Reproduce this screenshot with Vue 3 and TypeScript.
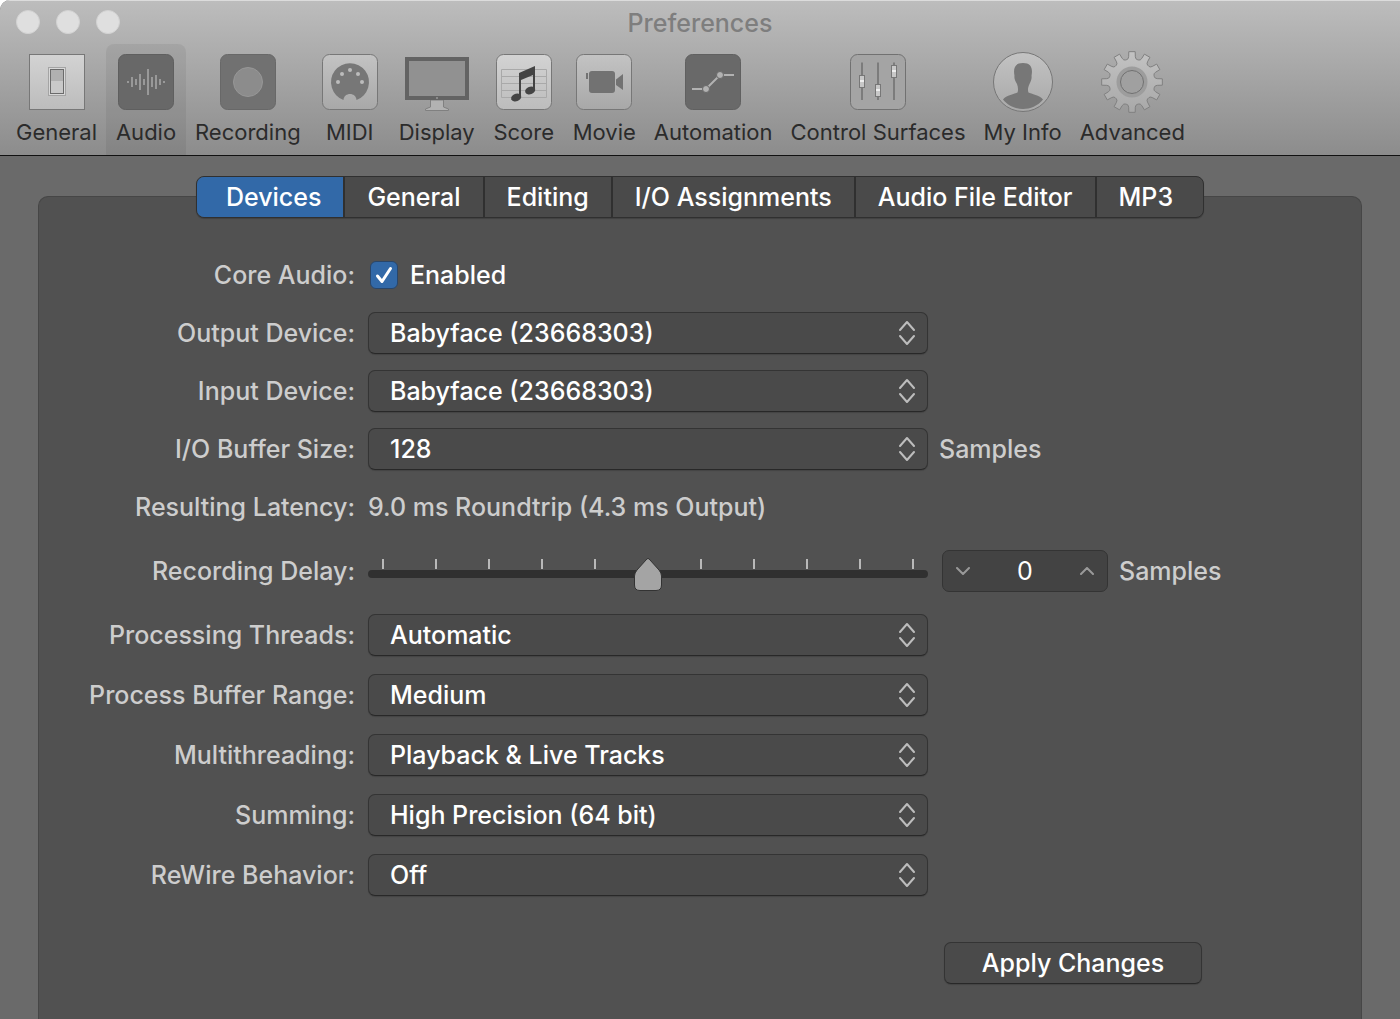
<script setup lang="ts">
import { ref } from 'vue'

interface Item {
  id: string
  label: string
}

interface SelectRow {
  id: string
  label: string
  value: string
  suffix?: string
}

const sections: Item[] = [
  { id: 'general', label: 'General' },
  { id: 'audio', label: 'Audio' },
  { id: 'recording', label: 'Recording' },
  { id: 'midi', label: 'MIDI' },
  { id: 'display', label: 'Display' },
  { id: 'score', label: 'Score' },
  { id: 'movie', label: 'Movie' },
  { id: 'automation', label: 'Automation' },
  { id: 'surfaces', label: 'Control Surfaces' },
  { id: 'info', label: 'My Info' },
  { id: 'advanced', label: 'Advanced' },
]
const activeSection = ref('audio')

const tabs = ['Devices', 'General', 'Editing', 'I/O Assignments', 'Audio File Editor', 'MP3']
const activeTab = ref('Devices')

const coreAudio = ref(true)
const delay = ref(0)

const deviceRows: SelectRow[] = [
  { id: 'output', label: 'Output Device:', value: 'Babyface (23668303)' },
  { id: 'input', label: 'Input Device:', value: 'Babyface (23668303)' },
  { id: 'buffer', label: 'I/O Buffer Size:', value: '128', suffix: 'Samples' },
]

const processingRows: SelectRow[] = [
  { id: 'threads', label: 'Processing Threads:', value: 'Automatic' },
  { id: 'range', label: 'Process Buffer Range:', value: 'Medium' },
  { id: 'multi', label: 'Multithreading:', value: 'Playback & Live Tracks' },
  { id: 'summing', label: 'Summing:', value: 'High Precision (64 bit)' },
  { id: 'rewire', label: 'ReWire Behavior:', value: 'Off' },
]

// x position and half height of each bar of the waveform.
const waveform = [
  [14, 1], [18, 5], [22, 3], [26, 8], [30, 3], [34, 13], [38, 5], [42, 7], [46, 3], [50, 1],
]

// Outline of a twelve-toothed cog centred in a 64 x 64 box.
function cog(): string {
  const at = (r: number, deg: number) => {
    const a = (deg * Math.PI) / 180
    return `${(32 + r * Math.sin(a)).toFixed(2)} ${(32 - r * Math.cos(a)).toFixed(2)}`
  }
  let d = `M${at(30.5, -6)}`
  for (let t = 0; t < 360; t += 30) {
    d += `L${at(30.5, t - 6)}L${at(30.5, t + 6)}`
    d += `L${at(25.5, t + 7.5)}Q${at(23, t + 9)} ${at(23, t + 13)}`
    d += `L${at(23, t + 17)}Q${at(23, t + 21)} ${at(25.5, t + 22.5)}`
  }
  return d + 'Z'
}
const cogPath = cog()
</script>

<template>
  <div class="window">
    <header class="header">
      <div class="titlebar">
        <div class="lights">
          <button type="button" aria-label="Close"></button>
          <button type="button" aria-label="Minimize"></button>
          <button type="button" aria-label="Zoom"></button>
        </div>
        <h1>Preferences</h1>
      </div>
      <nav class="toolbar">
        <button
          v-for="s in sections"
          :key="s.id"
          type="button"
          class="section"
          :class="{ active: s.id === activeSection }"
          @click="activeSection = s.id"
        >
          <svg class="icon" viewBox="0 0 64 64" aria-hidden="true">
            <defs>
              <linearGradient :id="'light-' + s.id" x1="0" y1="0" x2="0" y2="1">
                <stop offset="0" stop-color="#d3d3d3" />
                <stop offset="1" stop-color="#bcbcbc" />
              </linearGradient>
              <linearGradient :id="'mid-' + s.id" x1="0" y1="0" x2="0" y2="1">
                <stop offset="0" stop-color="#c3c3c3" />
                <stop offset="1" stop-color="#a8a8a8" />
              </linearGradient>
            </defs>

            <g v-if="s.id === 'general'">
              <rect x="4.5" y="4.5" width="55" height="55" :fill="`url(#light-${s.id})`" stroke="#777" />
              <rect x="23.5" y="17.5" width="17" height="28" fill="#d8d8d8" stroke="#a4a4a4" />
              <rect x="25.5" y="19.5" width="13" height="24" fill="#c9c9c9" stroke="#6b6b6b" />
              <rect x="26" y="20" width="12" height="11" fill="#b0b0b0" />
            </g>

            <g v-else-if="s.id === 'audio'">
              <rect x="4.5" y="4.5" width="55" height="55" rx="7" fill="#686868" stroke="#5f5f5f" />
              <g stroke="#999" stroke-width="2">
                <line
                  v-for="([x, h], i) in waveform"
                  :key="i"
                  :x1="x"
                  :x2="x"
                  :y1="32 - h"
                  :y2="32 + h"
                />
              </g>
            </g>

            <g v-else-if="s.id === 'recording'">
              <rect x="4.5" y="4.5" width="55" height="55" rx="7" fill="#717171" stroke="#686868" />
              <circle cx="32" cy="32" r="14.5" fill="#8c8c8c" stroke="#979797" />
            </g>

            <g v-else-if="s.id === 'midi'">
              <rect x="4.5" y="4.5" width="55" height="55" rx="7" :fill="`url(#mid-${s.id})`" stroke="#777" />
              <path d="M25.5 50A19 19 0 1 1 38.5 50C38 42 26 42 25.5 50Z" fill="#777" />
              <g fill="#bcbcbc">
                <circle cx="20" cy="32" r="2" />
                <circle cx="24" cy="24" r="2" />
                <circle cx="32" cy="20" r="2" />
                <circle cx="40" cy="24" r="2" />
                <circle cx="44" cy="32" r="2" />
              </g>
            </g>

            <g v-else-if="s.id === 'display'">
              <path d="M25.5 50H38.5V57L43.5 59V60.5H20.5V59L25.5 57Z" fill="#b2b2b2" stroke="#808080" />
              <rect x="2" y="9" width="60" height="39" fill="#919191" stroke="#636363" stroke-width="4" />
              <circle cx="32" cy="48" r="1" fill="#999" />
            </g>

            <g v-else-if="s.id === 'score'">
              <rect x="4.5" y="4.5" width="55" height="55" rx="7" :fill="`url(#light-${s.id})`" stroke="#777" />
              <path
                d="M9.5 19.5H54.5V47.5H9.5ZM9.5 26.5H54.5M9.5 33.5H54.5M9.5 40.5H54.5"
                fill="none"
                stroke="#a9a9a9"
              />
              <path d="M27 23L43 16V40H41V25L29 30V47H27Z" fill="#444" />
              <ellipse cx="24" cy="47.5" rx="5.2" ry="3.8" transform="rotate(-20 24 47)" fill="#444" />
              <ellipse cx="38" cy="40.5" rx="5.2" ry="3.8" transform="rotate(-20 38 40)" fill="#444" />
            </g>

            <g v-else-if="s.id === 'movie'">
              <rect x="4.5" y="4.5" width="55" height="55" rx="7" :fill="`url(#mid-${s.id})`" stroke="#777" />
              <rect x="17" y="21" width="26" height="22" rx="3" fill="#727272" />
              <path d="M44 29.5L51 24V40L44 35Z" fill="#727272" />
              <path d="M15 29V24H16" fill="none" stroke="#727272" stroke-width="2" />
            </g>

            <g v-else-if="s.id === 'automation'">
              <rect x="4.5" y="4.5" width="55" height="55" rx="7" fill="#696969" stroke="#606060" />
              <path d="M11 39H25L39 25H53" fill="none" stroke="#b2b2b2" stroke-width="2" />
              <g fill="#b2b2b2" stroke="#696969">
                <circle cx="25" cy="39" r="3.5" />
                <circle cx="39" cy="25" r="3.5" />
              </g>
            </g>

            <g v-else-if="s.id === 'surfaces'">
              <rect x="4.5" y="4.5" width="55" height="55" rx="7" fill="#a4a4a4" stroke="#717171" />
              <path d="M16 12.5V50M32 12.5V50M48 12.5V50" stroke="#555" />
              <g fill="#c8c8c8" stroke="#777">
                <rect x="13.5" y="25.5" width="5" height="12" />
                <rect x="29.5" y="34.5" width="5" height="12" />
                <rect x="45.5" y="15.5" width="5" height="12" />
              </g>
              <path d="M14 31H18M30 40H34M46 21H50" stroke="#eee" stroke-width="2" />
            </g>

            <g v-else-if="s.id === 'info'">
              <circle cx="32" cy="32" r="29.5" :fill="`url(#mid-${s.id})`" stroke="#777" />
              <path
                d="M12 49.5C15 45 24 44 26.5 42.5C27.5 40 27 37 26 34C24 31 23 28 23.5 26C22 18 24 13 32 13C40 13 42 18 40.5 26C41 28 40 31 38.5 34C37 37 36.5 40 37.5 42.5C40 44 49 45 52 49.5C47 56 39 59 32 59C25 59 17 56 12 49.5Z"
                fill="#777"
              />
            </g>

            <g v-else>
              <path :d="cogPath" :fill="`url(#mid-${s.id})`" stroke="#808080" stroke-linejoin="round" />
              <circle cx="32" cy="32" r="13.5" fill="none" stroke="#9d9d9d" stroke-width="4" />
              <circle cx="32" cy="32" r="11.5" fill="#a0a0a0" stroke="#707070" />
            </g>
          </svg>
          <span>{{ s.label }}</span>
        </button>
      </nav>
    </header>

    <main class="content">
      <div class="tabs" role="tablist">
        <button
          v-for="t in tabs"
          :key="t"
          type="button"
          role="tab"
          class="tab"
          :class="{ active: t === activeTab }"
          :aria-selected="t === activeTab"
          @click="activeTab = t"
        >
          {{ t }}
        </button>
      </div>

      <form class="panel" @submit.prevent>
        <div class="group devices">
          <div class="row">
            <label class="name" for="core">Core Audio:</label>
            <label class="check">
              <span class="box">
                <input id="core" v-model="coreAudio" type="checkbox" />
                <svg v-if="coreAudio" viewBox="0 0 28 28" aria-hidden="true">
                  <path d="M7.5 15L12 20.5L20.5 7.5" />
                </svg>
              </span>
              Enabled
            </label>
          </div>
          <div v-for="r in deviceRows" :key="r.id" class="row">
            <label class="name" :for="r.id">{{ r.label }}</label>
            <div class="control">
              <select :id="r.id">
                <option>{{ r.value }}</option>
              </select>
              <svg viewBox="0 0 16 26" aria-hidden="true">
                <path d="M1 10L8 2L15 10M1 16L8 24L15 16" />
              </svg>
            </div>
            <span v-if="r.suffix" class="suffix">{{ r.suffix }}</span>
          </div>
          <div class="row">
            <span class="name">Resulting Latency:</span>
            <output>9.0 ms Roundtrip (4.3 ms Output)</output>
          </div>
        </div>

        <div class="row">
          <label class="name" for="delay">Recording Delay:</label>
          <div class="control slider">
            <div class="ticks" aria-hidden="true">
              <i v-for="n in 11" :key="n" :class="{ middle: n === 6 }"></i>
            </div>
            <input id="delay" v-model.number="delay" type="range" min="-5000" max="5000" />
          </div>
          <div class="stepper">
            <button type="button" aria-label="Decrease" @click="delay--">
              <svg viewBox="0 0 14 8" aria-hidden="true"><path d="M1 1L7 7L13 1" /></svg>
            </button>
            <input v-model.number="delay" type="text" aria-label="Recording delay in samples" />
            <button type="button" aria-label="Increase" @click="delay++">
              <svg viewBox="0 0 14 8" aria-hidden="true"><path d="M1 7L7 1L13 7" /></svg>
            </button>
          </div>
          <span class="suffix">Samples</span>
        </div>

        <div class="group processing">
          <div v-for="r in processingRows" :key="r.id" class="row">
            <label class="name" :for="r.id">{{ r.label }}</label>
            <div class="control">
              <select :id="r.id">
                <option>{{ r.value }}</option>
              </select>
              <svg viewBox="0 0 16 26" aria-hidden="true">
                <path d="M1 10L8 2L15 10M1 16L8 24L15 16" />
              </svg>
            </div>
          </div>
        </div>

        <div class="actions">
          <button type="submit" class="apply">Apply Changes</button>
        </div>
      </form>
    </main>
  </div>
</template>

<style>
body {
  background: #fff;
}
</style>

<style scoped>
.window,
.window * {
  box-sizing: border-box;
}

.window {
  display: flex;
  flex-direction: column;
  min-height: 100vh;
  overflow: hidden;
  border-radius: 10px 0 0 0;
  background: #6a6a6a;
  color: #cdcdcd;
  font-family: Inter, "Liberation Sans", sans-serif;
  font-size: 25px;
  font-weight: 500;
  line-height: 32px;
}

button,
input,
select {
  margin: 0;
  padding: 0;
  border: 0;
  background: none;
  color: inherit;
  font: inherit;
}

.header {
  border-bottom: 1px solid #111;
  background: linear-gradient(#bdbdbd, #8c8c8c);
  box-shadow: inset 0 1px #dcdcdc;
}

.titlebar {
  display: grid;
  grid-template-columns: 1fr auto 1fr;
  align-items: center;
  height: 44px;
  padding: 0 16px;
}

.lights {
  display: flex;
  gap: 16px;
}

.lights button {
  width: 24px;
  height: 24px;
  border: 1px solid #d2d2d2;
  border-radius: 50%;
  background: #dfdfdf;
}

h1 {
  margin: 0;
  padding-top: 2px;
  color: #7e7e7e;
  font-size: 25px;
  font-weight: 500;
}

.toolbar {
  display: flex;
  padding-left: 7px;
}

.section {
  display: flex;
  flex-direction: column;
  align-items: center;
  gap: 4px;
  min-width: 80px;
  padding: 6px 9px 9px;
  color: #2b2b2b;
  font-size: 22px;
  font-weight: 400;
  line-height: 28px;
  white-space: nowrap;
}

.section.active {
  border-radius: 8px 8px 0 0;
  background: rgba(0, 0, 0, 0.06);
}

.icon {
  width: 64px;
  height: 64px;
  margin: 0 -2px;
}

.content {
  display: flex;
  flex: 1;
  flex-direction: column;
  padding: 20px 38px 0;
}

.tabs {
  position: relative;
  display: flex;
  align-self: center;
  height: 42px;
  margin-bottom: -22px;
  overflow: hidden;
  border: 1px solid #303030;
  border-radius: 8px;
  background: #4a4a4a;
  box-shadow: 0 1px 1px rgba(0, 0, 0, 0.2);
}

.tab {
  padding: 0 22px;
  color: #fff;
  white-space: nowrap;
}

.tab + .tab {
  border-left: 2px solid #303030;
}

.tab:first-child {
  padding-left: 29px;
}

.tab:last-child {
  padding-right: 30px;
}

.tab.active {
  background: #3269a8;
}

.panel {
  flex: 1;
  padding: 57px 0 34px;
  border: 1px solid #464646;
  border-bottom: 0;
  border-radius: 10px 10px 0 0;
  background: #515151;
}

.group {
  display: flex;
  flex-direction: column;
}

.devices {
  gap: 16px;
  margin-bottom: 22px;
}

.processing {
  gap: 18px;
  margin-top: 22px;
}

.row {
  display: flex;
  align-items: center;
  height: 42px;
  white-space: nowrap;
}

.name {
  flex: none;
  width: 316px;
  margin-right: 13px;
  text-align: right;
}

.check {
  display: flex;
  align-items: center;
  gap: 12px;
  padding-left: 2px;
  color: #fff;
}

.box {
  display: grid;
  width: 28px;
  height: 28px;
}

.box > * {
  grid-area: 1 / 1;
}

.box input {
  width: 28px;
  height: 28px;
  appearance: none;
  border: 1px solid #29466a;
  border-radius: 6px;
  background: #4a4a4a;
}

.box input:checked {
  background: #3269a8;
}

.box svg,
.control svg,
.stepper svg {
  fill: none;
  stroke: #fff;
  stroke-width: 3;
  stroke-linecap: round;
  stroke-linejoin: round;
  pointer-events: none;
}

.control {
  display: grid;
  flex: 0 1 560px;
  align-items: center;
  height: 42px;
}

.control > * {
  grid-area: 1 / 1;
}

.control svg {
  justify-self: end;
  width: 16px;
  height: 26px;
  margin-right: 13px;
  stroke: #bdbdbd;
  stroke-width: 2;
}

select {
  width: 100%;
  height: 42px;
  padding: 0 40px 0 21px;
  appearance: none;
  border: 1px solid #343434;
  border-bottom-color: #282828;
  border-radius: 7px;
  background: #4a4a4a;
  box-shadow: 0 1px 1px rgba(0, 0, 0, 0.16);
  color: #fff;
}

.suffix {
  margin-left: 11px;
}

.slider {
  margin-right: 14px;
}

.ticks {
  display: flex;
  align-self: start;
  justify-content: space-between;
  padding: 9px 14px 0;
}

.ticks i {
  width: 2px;
  height: 10px;
  background: #b9b9b9;
}

.ticks .middle {
  visibility: hidden;
}

.slider input {
  width: 100%;
  height: 42px;
  appearance: none;
}

.slider input::-webkit-slider-runnable-track {
  height: 8px;
  margin-top: 6px;
  border-radius: 4px;
  background: #303030;
}

.slider input::-webkit-slider-thumb {
  width: 28px;
  height: 34px;
  margin-top: -12px;
  appearance: none;
  background: url("data:image/svg+xml,%3Csvg xmlns='http://www.w3.org/2000/svg' viewBox='0 0 28 34'%3E%3Cpath d='M14 .5Q15 .5 16 2L25 12Q27.5 15 27.5 18V27Q27.5 32.5 22 32.5H6Q.5 32.5 .5 27V18Q.5 15 3 12L12 2Q13 .5 14 .5Z' fill='%23a4a4a4' stroke='%23333'/%3E%3C/svg%3E");
}

.stepper {
  display: flex;
  align-items: center;
  width: 166px;
  height: 42px;
  border: 1px solid #343434;
  border-radius: 7px;
  background: #434343;
}

.stepper input {
  flex: 1;
  min-width: 0;
  color: #fff;
  font-weight: 400;
  text-align: center;
}

.stepper button {
  display: grid;
  place-items: center;
  width: 40px;
  height: 40px;
}

.stepper svg {
  width: 14px;
  height: 8px;
  stroke: #999;
  stroke-width: 2;
}

.actions {
  display: flex;
  justify-content: flex-end;
  padding: 46px 159px 0 0;
}

.apply {
  width: 258px;
  height: 42px;
  border: 1px solid #343434;
  border-bottom-color: #282828;
  border-radius: 7px;
  background: #4a4a4a;
  box-shadow: 0 1px 1px rgba(0, 0, 0, 0.16);
  color: #fff;
}
</style>
